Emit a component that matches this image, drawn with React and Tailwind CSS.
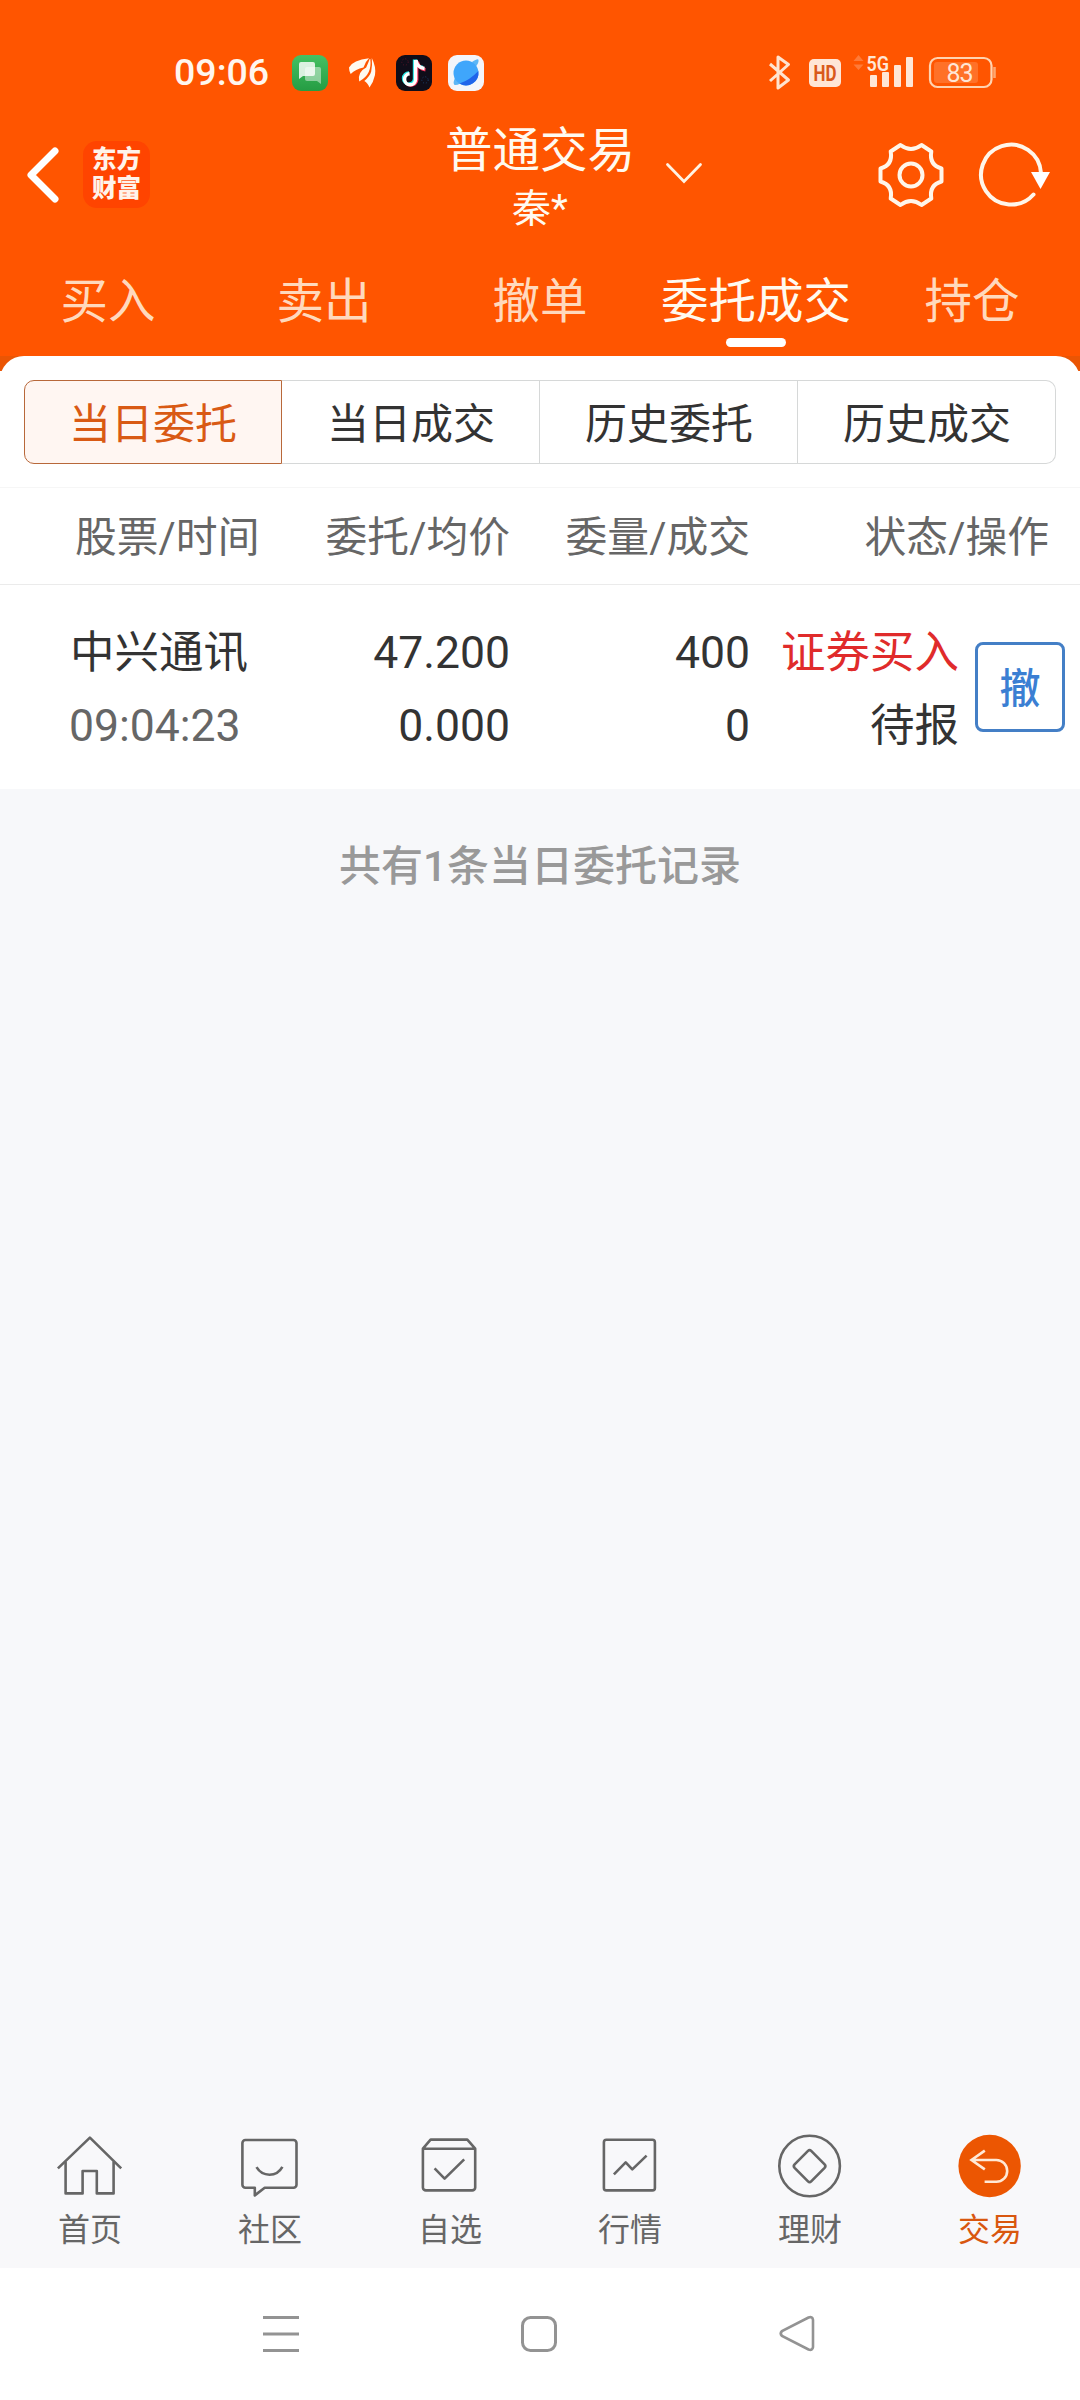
const tabs = ["买入", "卖出", "撤单", "委托成交", "持仓"];
const segments = ["当日委托", "当日成交", "历史委托", "历史成交"];

const orders = [
  { name: "中兴通讯", time: "09:04:23", price: "47.200", avg: "0.000", amount: "400", filled: "0", side: "证券买入", status: "待报" },
];

const NavIcon = ({ children }) => (
  <svg width="72" height="72" viewBox="0 0 72 72" fill="none" stroke="#666" strokeWidth="2.6" strokeLinejoin="round">
    {children}
  </svg>
);

const navItems = [
  {
    label: "首页",
    icon: (
      <NavIcon>
        <path d="M3.9 38.4 35.9 7.6 67.2 38.4" />
        <path d="M11.6 31.5v31.9h17V41h14.2v22.4h16.8V31.5" />
      </NavIcon>
    ),
  },
  {
    label: "社区",
    icon: (
      <NavIcon>
        <path d="M11.4 10h48.1a3 3 0 0 1 3 3v41.7a3 3 0 0 1-3 3H30.7L20.8 65.4V57.7h-9.4a3 3 0 0 1-3-3V13a3 3 0 0 1 3-3Z" />
        <path d="M22.5 37.2Q27 44.7 35.5 44.7T48.4 36.8" />
      </NavIcon>
    ),
  },
  {
    label: "自选",
    icon: (
      <NavIcon>
        <path d="M8.9 18.7 16.6 9.6h36.7L61.2 18.7v38.7a3 3 0 0 1-3 3H11.9a3 3 0 0 1-3-3ZM8.9 18.7h52.3" />
        <path d="M20.6 38.4 30.6 48.6 50.2 29.4" />
      </NavIcon>
    ),
  },
  {
    label: "行情",
    icon: (
      <NavIcon>
        <rect x="9.9" y="9.8" width="51" height="50.6" rx="2.5" />
        <path d="M19.9 44.4 31.7 32.4 38.3 39.4 52.6 25.6" />
      </NavIcon>
    ),
  },
  {
    label: "理财",
    icon: (
      <NavIcon>
        <circle cx="35.6" cy="36" r="30.3" />
        <path d="M34 20.9q1.6-1.6 3.2 0L50.6 34.4q1.6 1.7 0 3.4L37.2 51.4q-1.6 1.6-3.2 0L20.6 37.8q-1.6-1.7 0-3.4Z" />
      </NavIcon>
    ),
  },
  {
    label: "交易",
    active: true,
    icon: (
      <NavIcon>
        <circle cx="35.6" cy="36" r="31.2" fill="#ec5602" stroke="none" />
        <path d="M30.8 20.6 17.5 30 30.8 39.4M17.5 30h24.8a10.9 10.9 0 0 1 0 21.8H30.6" stroke="#ffe9d6" strokeLinejoin="miter" />
      </NavIcon>
    ),
  },
];

const StatusBar = () => (
  <div className="flex h-[108px] items-center pt-[38px]">
    <span className="ml-[174px] w-[118px] text-[37.5px] font-medium leading-none text-[#fff6ee]">09:06</span>
    <div className="flex gap-4">
      <svg width="36" height="36" viewBox="0 1 36 36">
        <defs>
          <linearGradient id="msg" x2="0" y2="1">
            <stop stopColor="#45c163" />
            <stop offset="1" stopColor="#259c43" />
          </linearGradient>
        </defs>
        <rect y="1" width="36" height="36" rx="9" fill="url(#msg)" />
        <path d="M15 13h12q2 0 2 2v15l-4-3H15q-2 0-2-2V15q0-2 2-2Z" fill="#fff" opacity=".45" />
        <path d="M9 8h12q2 0 2 2v10q0 2-2 2H11l-4 3V10q0-2 2-2Z" fill="#fff" opacity=".82" />
      </svg>
      <svg width="36" height="36" viewBox="0 0 36 36" fill="#fffaf0">
        <path d="M5 12.5Q9 5 25 3.3 21 7 19.5 12.5 11.500 14 6.7 19Q5 16 5 12.5Z" />
        <path d="M25.700 4q-1.500 4-3.500 8.500-9 4.500-7 14 7-4 9.500-9.500 2.500-5 1.600-13Z" />
        <path d="M27.8 3q4.500 9 3.200 17-1.500 7-5.500 12.500-2-5-5.200-6.500 5.700-5 6.900-9.500 1.300-6 .6-13.500Z" />
      </svg>
      <svg width="36" height="36" viewBox="0 1 36 36">
        <rect y="1" width="36" height="36" rx="9" fill="#100d19" />
        <circle cx="9" cy="8" r="3.2" fill="none" stroke="#5a1428" strokeDasharray="1 2" />
        <circle cx="29" cy="26" r="3.2" fill="none" stroke="#1b4470" strokeDasharray="1 2" />
        <g fill="none" strokeWidth="3.4">
          <path d="M18.5 5.5v19.5a5.5 5.5 0 1 1-5.5-6M19 5.5q1 7.5 8 8" stroke="#25e9e6" />
          <path d="M20.7 7v19a6 6 0 0 1-10 3.5M21.5 8q1.5 7 8 7.8" stroke="#f5335a" />
          <path d="M19.6 6v19.5a5.5 5.5 0 1 1-6-5.7M20 6q1 7.5 8.5 8.5" stroke="#fff" />
        </g>
      </svg>
      <svg width="36" height="36" viewBox="0 1 36 36">
        <rect y="1" width="36" height="36" rx="9" fill="#f3f5fa" />
        <path d="M24 8q6-4 6.5-2 .5 3-3 7ZM7 24q-2.5 5-.5 7 2 .5 6-1.5Z" fill="#5cb6f6" />
        <circle cx="18" cy="19" r="12.5" fill="#3fa6fb" />
        <path d="M30.3 17A12.5 12.5 0 0 1 11.5 29.6Q22 26 30.3 17Z" fill="#1f64ea" />
      </svg>
    </div>
    <svg className="ml-[285px]" width="228" height="46" viewBox="769 50 228 46" fill="none">
      <path d="m770 64 18.500 16-10.500 8V57l10.500 7.500L770 81" stroke="#ffe3cf" strokeWidth="3" strokeLinejoin="round" />
      <rect x="809" y="59" width="32" height="28" rx="5" fill="#ffe6d6" />
      <text x="825" y="81" fontSize="22" fontWeight="700" fill="#d9591a" textAnchor="middle" textLength="23" lengthAdjust="spacingAndGlyphs">HD</text>
      <path d="m853.5 61 5-6 5 6ZM853.5 64.5l5 5.5 5-5.5Z" fill="#ff7a38" />
      <text x="866.5" y="70.5" fontSize="21" fontWeight="600" fill="#ffe6d6" textLength="22.5" lengthAdjust="spacingAndGlyphs">5G</text>
      <g fill="#ffe6d6">
        <rect x="870" y="75" width="7" height="12" rx="1" />
        <rect x="882" y="72" width="7" height="15" rx="1" />
        <rect x="894" y="65" width="7" height="22" rx="1" />
        <rect x="906" y="57" width="7" height="30" rx="1" />
      </g>
      <rect x="930" y="58" width="61.5" height="29" rx="7.5" stroke="#ffd3b0" strokeWidth="2.2" />
      <rect x="934" y="62" width="44" height="21" rx="3" fill="#ff7128" />
      <path d="M994.5 67v11" stroke="#ffa66e" strokeWidth="2.6" />
      <text x="960" y="81.5" fontSize="25" fill="#ffe6d6" textAnchor="middle" textLength="27">83</text>
    </svg>
  </div>
);

const TitleBar = () => (
  <div className="flex h-[133px] items-center">
    <svg className="ml-[24px]" width="38" height="60" viewBox="0 0 38 60">
      <path d="M31 6 7 30l24 24" fill="none" stroke="#fff" strokeWidth="7" strokeLinecap="round" strokeLinejoin="round" />
    </svg>
    <div className="ml-[21px] flex h-[67px] w-[67px] flex-col items-center justify-center rounded-[14px] bg-[#ff4400] pb-px text-[24.5px] font-black leading-[29px] text-[#fff3ea]">
      <span>东方</span>
      <span>财富</span>
    </div>
    <div className="ml-[250px] mt-[5px] w-[280px] text-center text-[#fffaf0]">
      <div className="text-[47.5px] leading-[64px]">普通交易</div>
      <div className="text-[39px] leading-[52px]">秦*</div>
    </div>
    <svg className="-ml-[16px] mt-[-4px]" width="40" height="24" viewBox="0 0 40 24">
      <path d="M3.5 3.5 20 20.5 36.5 3.5" fill="none" stroke="#fff3e4" strokeWidth="2.8" strokeLinecap="round" />
    </svg>
    <svg className="ml-[172px]" width="70" height="70" viewBox="-35 -35 70 70" fill="none" stroke="#fff6ea" strokeLinejoin="round">
      <path
        d="M30.5 6.5Q18 10 20.3 23.5L10.5 30Q0 22 -10.5 30L-20.3 23.5Q-18 10 -30.5 6.5V-6.5Q-18 -10 -20.3 -23.5L-10.5 -30Q0 -22 10.5 -30L20.3 -23.5Q18 -10 30.5 -6.5Z"
        strokeWidth="4"
      />
      <circle r="11.5" strokeWidth="4" />
    </svg>
    <svg className="ml-[29px]" width="76" height="70" viewBox="-36 -35 76 70" fill="none">
      <path d="M22.5 19.5A30 30 0 1 1 30 -2" stroke="#fff6ea" strokeWidth="4" strokeLinecap="round" />
      <path d="M20 -3h19L29.5 14Z" fill="#fff" />
    </svg>
  </div>
);

const App = () => {
  return (
    <div className="flex h-[2400px] w-[1080px] flex-col bg-[#f7f8fa] font-[Roboto,'Noto_Sans_CJK_SC',sans-serif] text-[#333]">
      <header className="bg-[#ff5500]">
        <StatusBar />
        <TitleBar />
        <div className="grid h-[115px] grid-cols-5">
          {tabs.map((tab) => (
            <div key={tab} className="flex flex-col items-center pt-[26px]">
              <span className={`whitespace-nowrap text-[47.5px] leading-[70px] ${tab === "委托成交" ? "text-[#fffaf0]" : "text-[#ffd9bd]"}`}>
                {tab}
              </span>
              {tab === "委托成交" && <span className="mt-px h-[9px] w-[60px] rounded-full bg-white" />}
            </div>
          ))}
        </div>
      </header>

      {/* Rounded top edge of the card */}
      <div className="h-[15px] overflow-hidden bg-[#ea5504]">
        <div className="h-[50px] rounded-t-[24px] bg-white" />
      </div>

      <main className="bg-white">
        <div className="mx-6 mt-[9px] flex h-[84px]">
          {segments.map((item, i) => (
            <div
              key={item}
              className={`flex w-[258px] items-center justify-center border pt-[4px] text-[42px] ${
                i === 0
                  ? "rounded-l-[10px] border-[#b8683a] bg-[#fff6f2] text-[#d95a14]"
                  : "border-l-0 border-[#d6d8d8] pl-px"
              } ${i === 3 ? "rounded-r-[10px]" : ""}`}
            >
              {item}
            </div>
          ))}
        </div>

        {/* Table header */}
        <div className="mt-[23px] flex h-[98px] items-center border-y border-t-[#f6f6f6] border-b-[#ebebeb] pt-[5px] text-[41.8px] text-[#666]">
          <span className="w-[270px] pl-[75px]">股票/时间</span>
          <span className="w-[240px] text-right">委托/均价</span>
          <span className="w-[240px] text-right">委量/成交</span>
          <span className="w-[299px] text-right">状态/操作</span>
        </div>

        {orders.map((order) => (
          <div key={order.time} className="flex h-[204px] items-center text-[44.5px] leading-[73px]">
            <div className="w-[270px] pt-[6px] pl-[69px]">
              <div className="pl-px">{order.name}</div>
              <div className="text-[#666]">{order.time}</div>
            </div>
            <div className="w-[240px] pt-[6px] text-right">
              <div>{order.price}</div>
              <div>{order.avg}</div>
            </div>
            <div className="w-[240px] pt-[6px] text-right">
              <div>{order.amount}</div>
              <div>{order.filled}</div>
            </div>
            <div className="w-[209px] pt-[6px] text-right">
              <div className="text-[#e02b2b]">{order.side}</div>
              <div>{order.status}</div>
            </div>
            <button className="ml-4 flex h-[90px] w-[90px] items-center justify-center rounded-lg border-3 border-[#447fc6] pt-[5px] text-[41px] font-medium text-[#3b7fd3]">
              撤
            </button>
          </div>
        ))}
      </main>

      <p className="mt-[47px] text-center text-[42px] font-medium leading-[62px] text-[#999]">共有1条当日委托记录</p>

      <nav className="mt-auto grid h-[158px] grid-cols-6 bg-[#f8f8fa] pt-[20px]">
        {navItems.map((item) => (
          <div key={item.label} className="flex flex-col items-center">
            {item.icon}
            <span className={`mt-[5px] text-[32px] leading-[46px] ${item.active ? "text-[#d9570f]" : "text-[#666]"}`}>{item.label}</span>
          </div>
        ))}
      </nav>

      {/* System navigation */}
      <div className="flex h-[132px] items-center justify-center bg-white">
        <svg width="600" height="44" viewBox="240 2312 600 44" fill="none" stroke="#939393" strokeWidth="3">
          <path d="M263 2317.5h36M263 2334h36M263 2350.5h36" />
          <rect x="522.5" y="2317.5" width="33" height="33" rx="8" />
          <path d="M808.5 2317.5q4-1.5 4.5 2.5v27q-.5 4-4.5 2.500L782 2336q-2.5-2.500 0-5Z" strokeWidth="2.6" />
        </svg>
      </div>
    </div>
  );
};

export default App;
